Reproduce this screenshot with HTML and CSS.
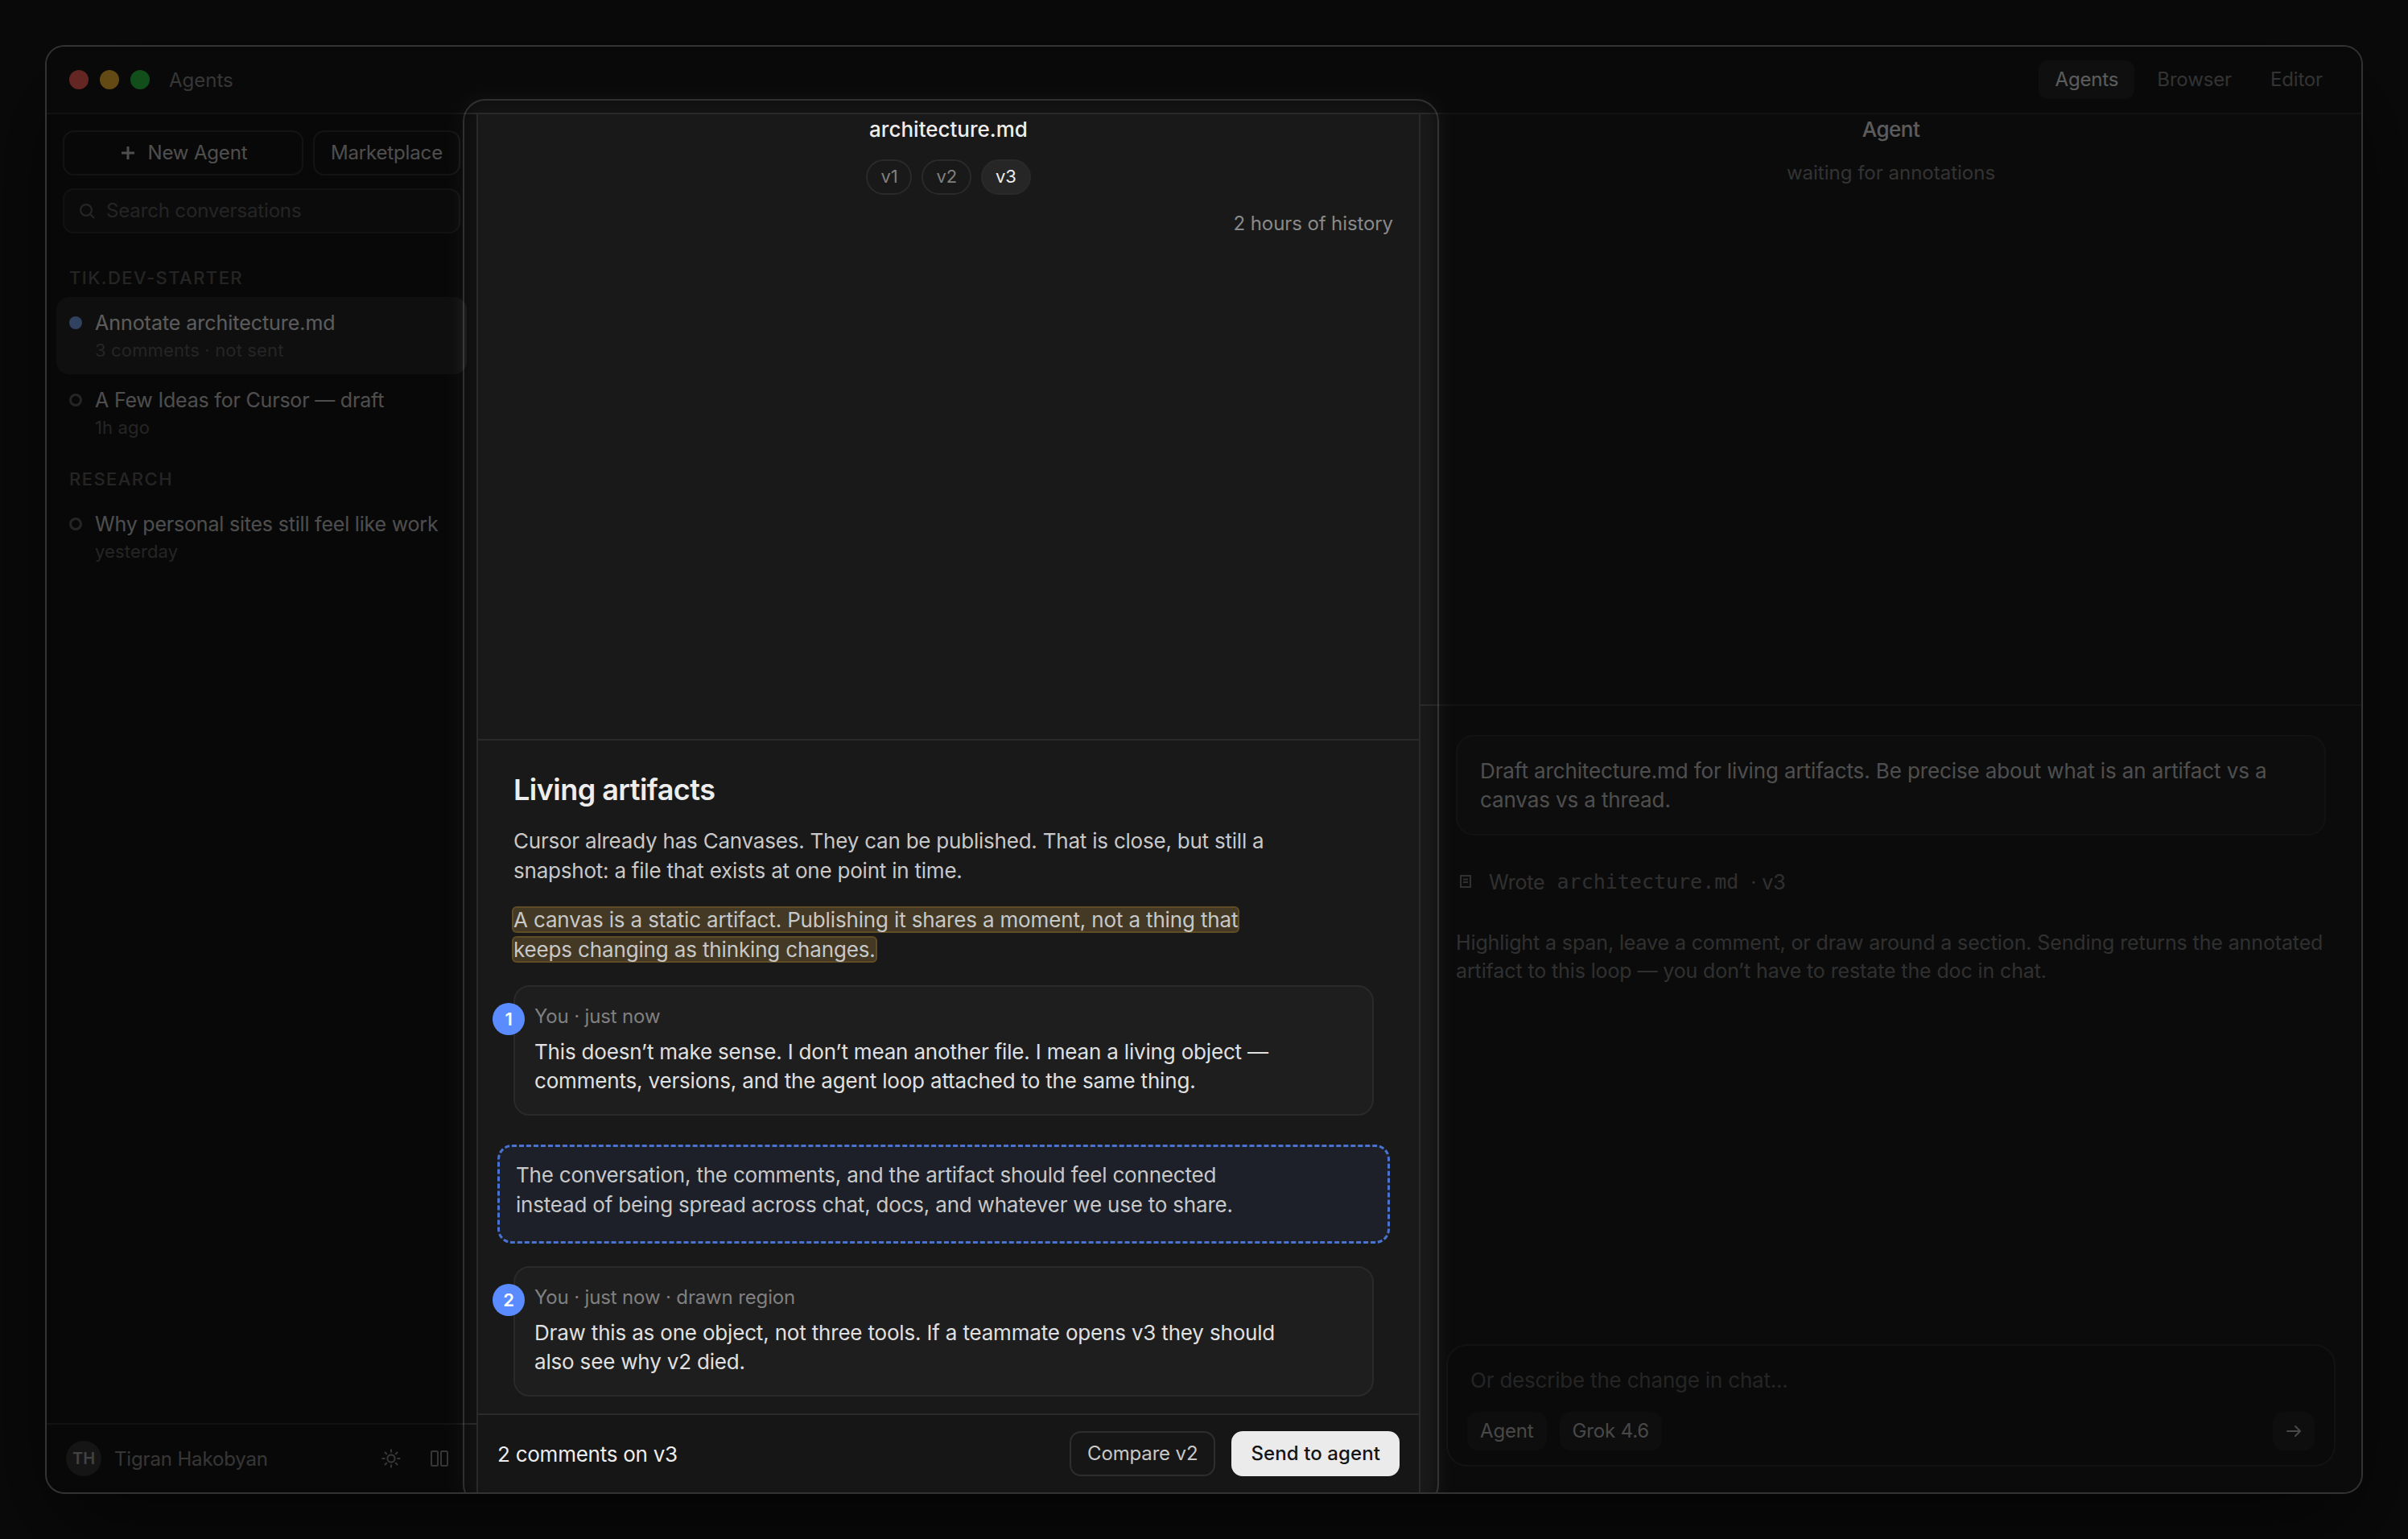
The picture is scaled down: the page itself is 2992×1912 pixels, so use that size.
FILE: index.html
```html
<!DOCTYPE html>
<html lang="en">
<head>
    <meta charset="UTF-8">
    <meta name="viewport" content="width=device-width, initial-scale=1.0">
    <title>Agents</title>
    <link rel="stylesheet" href="styles.css">
</head>
<body>

<div class="window">
    <header class="titlebar">
        <div class="lights">
            <span class="light red"></span>
            <span class="light yellow"></span>
            <span class="light green"></span>
        </div>
        <span class="window-title">Agents</span>
        <nav class="tabs">
            <a class="tab active">Agents</a>
            <a class="tab">Browser</a>
            <a class="tab">Editor</a>
        </nav>
    </header>

    <div class="panes">
        <aside class="sidebar">
            <div class="actions">
                <button class="btn new-agent">
                    <svg width="24" height="24" viewBox="0 0 24 24" fill="none" stroke="currentColor" stroke-width="3"><path d="M12 4v16M4 12h16"/></svg>
                    New Agent
                </button>
                <button class="btn">Marketplace</button>
            </div>
            <div class="search">
                <svg width="24" height="24" viewBox="0 0 24 24" fill="none" stroke="currentColor" stroke-width="2.2" stroke-linecap="round"><circle cx="11" cy="11" r="6.9"/><path d="M16 16l4.3 4.3"/></svg>
                <span>Search conversations</span>
            </div>

            <h2 class="group first">TIK.DEV-STARTER</h2>
            <div class="item selected">
                <span class="dot filled"></span>
                <div>
                    <div class="item-title">Annotate architecture.md</div>
                    <div class="item-sub">3 comments · not sent</div>
                </div>
            </div>
            <div class="item">
                <span class="dot"></span>
                <div>
                    <div class="item-title">A Few Ideas for Cursor — draft</div>
                    <div class="item-sub">1h ago</div>
                </div>
            </div>

            <h2 class="group">RESEARCH</h2>
            <div class="item">
                <span class="dot"></span>
                <div>
                    <div class="item-title">Why personal sites still feel like work</div>
                    <div class="item-sub">yesterday</div>
                </div>
            </div>

            <footer class="account">
                <span class="avatar">TH</span>
                <span class="account-name">Tigran Hakobyan</span>
                <span class="icon-btn">
                    <svg width="28" height="28" viewBox="0 0 28 28" fill="none" stroke="currentColor" stroke-width="2.1" stroke-linecap="round"><circle cx="14" cy="14" r="4.6"/><path d="M14 3.4v2.4M14 22.2v2.4M3.4 14h2.4M22.2 14h2.4M6.5 6.5l1.7 1.7M19.8 19.8l1.7 1.7M6.5 21.5l1.7-1.7M19.8 8.2l1.7-1.7"/></svg>
                </span>
                <span class="icon-btn">
                    <svg width="28" height="28" viewBox="0 0 28 28" fill="none" stroke="currentColor" stroke-width="2"><rect x="4" y="5" width="8" height="18" rx="1.5"/><rect x="16" y="5" width="8" height="18" rx="1.5"/></svg>
                </span>
            </footer>
        </aside>

        <main class="artifact">
            <div class="artifact-head">
                <div class="pane-title">architecture.md</div>
                <div class="versions">
                    <span class="version">v1</span>
                    <span class="version">v2</span>
                    <span class="version current">v3</span>
                </div>
                <div class="history">2 hours of history</div>
            </div>

            <article class="doc">
                <h1>Living artifacts</h1>
                <p class="lead">Cursor already has Canvases. They can be published. That is close, but still a snapshot: a file that exists at one point in time.</p>
                <p><mark>A canvas is a static artifact. Publishing it shares a moment, not a thing that keeps changing as thinking changes.</mark></p>

                <div class="comment">
                    <span class="badge">1</span>
                    <div class="comment-meta">You · just now</div>
                    <div class="comment-text">This doesn’t make sense. I don’t mean another file. I mean a living object — comments, versions, and the agent loop attached to the same thing.</div>
                </div>

                <div class="region">
                    <p>The conversation, the comments, and the artifact should feel connected instead of being spread across chat, docs, and whatever we use to share.</p>
                </div>

                <div class="comment">
                    <span class="badge">2</span>
                    <div class="comment-meta">You · just now · drawn region</div>
                    <div class="comment-text">Draw this as one object, not three tools. If a teammate opens v3 they should also see why v2 died.</div>
                </div>
            </article>

            <footer class="review-bar">
                <span class="review-count">2 comments on v3</span>
                <button class="btn">Compare v2</button>
                <button class="btn primary">Send to agent</button>
            </footer>
        </main>

        <section class="agent">
            <div class="agent-head">
                <div class="pane-title">Agent</div>
                <div class="agent-status">waiting for annotations</div>
            </div>

            <div class="thread">
                <div class="message">Draft architecture.md for living artifacts. Be precise about what is an artifact vs a canvas vs a thread.</div>
                <div class="tool-row">
                    <svg width="26" height="26" viewBox="0 0 26 26" fill="none" stroke="currentColor" stroke-width="2"><path d="M6 5h12v14H6zM9 9.5h6M9 13h6"/></svg>
                    <span>Wrote</span>
                    <code>architecture.md</code>
                    <span>· v3</span>
                </div>
                <p class="reply">Highlight a span, leave a comment, or draw around a section. Sending returns the annotated artifact to this loop — you don’t have to restate the doc in chat.</p>
            </div>

            <div class="composer">
                <div class="placeholder">Or describe the change in chat...</div>
                <div class="composer-row">
                    <span class="chip">Agent</span>
                    <span class="chip">Grok 4.6</span>
                    <span class="chip send">
                        <svg width="24" height="24" viewBox="0 0 24 24" fill="none" stroke="currentColor" stroke-width="2" stroke-linecap="round" stroke-linejoin="round"><path d="M4 12h16M14 6l6 6-6 6"/></svg>
                    </span>
                </div>
            </div>
        </section>
    </div>

    <!-- dims everything but the artifact pane -->
    <div class="dim"></div>
    <div class="spotlight"></div>
</div>

</body>
</html>
```

FILE: styles.css
```css
* {
    box-sizing: border-box;
    margin: 0;
    padding: 0;
}
body {
    width: 2992px;
    height: 1912px;
    padding: 56px;
    overflow: hidden;
    background: #0a0a0a;
    color: #ededed;
    font-family: Inter, "Liberation Sans", sans-serif;
    font-size: 24px;
    letter-spacing: -0.15px;
}
svg {
    display: block;
    flex: none;
}
.window {
    position: relative;
    display: flex;
    flex-direction: column;
    width: 2880px;
    height: 1800px;
    overflow: hidden;
    background: #121212;
    border: 2px solid #333;
    border-radius: 24px;
    box-shadow: 0 48px 120px rgba(0, 0, 0, 0.55);
}

/* title bar */
.titlebar {
    display: flex;
    align-items: center;
    height: 84px;
    padding: 0 28px;
    background: #141414;
    border-bottom: 2px solid #2a2a2a;
}
.lights {
    display: flex;
    gap: 14px;
}
.light {
    width: 24px;
    height: 24px;
    border-radius: 50%;
}
.red {
    background: #ff5f57;
}
.yellow {
    background: #febc2e;
}
.green {
    background: #28c840;
}
.window-title {
    margin-left: 24px;
    letter-spacing: 0;
    color: #8a8a8a;
}
.tabs {
    display: flex;
    gap: 8px;
    margin-left: auto;
}
.tab {
    height: 48px;
    padding: 0 20px;
    line-height: 48px;
    border-radius: 12px;
    color: #808080;
}
.tab.active {
    background: #232323;
    color: #ededed;
}

.panes {
    display: grid;
    grid-template-columns: 536px 1171px 1169px;
    flex: 1;
    min-height: 0;
}
.btn {
    display: flex;
    align-items: center;
    justify-content: center;
    gap: 12px;
    height: 56px;
    padding: 0 20px 1px;
    background: none;
    border: 2px solid #2e2e2e;
    border-radius: 14px;
    color: #c8c8c8;
    font: inherit;
    letter-spacing: inherit;
}

/* sidebar */
.sidebar {
    display: flex;
    flex-direction: column;
    padding-top: 20px;
    border-right: 2px solid #2a2a2a;
}
.actions {
    display: flex;
    gap: 12px;
    margin: 0 20px;
}
.new-agent {
    flex: 1;
}
.search {
    display: flex;
    align-items: center;
    gap: 12px;
    height: 56px;
    margin: 16px 20px 0;
    padding: 0 16px 1px;
    background: #181818;
    border: 2px solid #2a2a2a;
    border-radius: 14px;
    color: #5c5c5c;
}
.group {
    margin: 20px 28px 10px;
    font-size: 22px;
    font-weight: 500;
    line-height: 28px;
    letter-spacing: 1.45px;
    color: #5c5c5c;
}
.group.first {
    margin-top: 41px;
}
.item {
    display: flex;
    gap: 16px;
    margin: 0 12px;
    padding: 14px 16px;
    border-radius: 16px;
}
.item.selected {
    background: #232323;
}
.dot {
    width: 16px;
    height: 16px;
    margin-top: 10px;
    border: 3px solid #5c5c5c;
    border-radius: 50%;
}
.dot.filled {
    background: #7ba8f7;
    border: none;
}
.item-title {
    font-size: 25px;
    line-height: 36px;
    letter-spacing: -0.2px;
    color: #c8c8c8;
}
.selected .item-title {
    letter-spacing: -0.04px;
    color: #ededed;
}
.item-sub {
    font-size: 22px;
    line-height: 32px;
    letter-spacing: 0.15px;
    color: #5c5c5c;
}
.account {
    display: flex;
    align-items: center;
    gap: 16px;
    height: 86px;
    margin-top: auto;
    padding: 0 24px;
    border-top: 2px solid #2a2a2a;
    color: #8a8a8a;
}
.avatar {
    width: 44px;
    height: 44px;
    border-radius: 50%;
    background: #333;
    color: #a8a8a8;
    font-size: 20px;
    font-weight: 600;
    line-height: 44px;
    text-align: center;
}
.account-name {
    flex: 1;
}
.icon-btn {
    display: flex;
    align-items: center;
    justify-content: center;
    width: 44px;
    height: 44px;
}

/* artifact pane */
.artifact {
    display: flex;
    flex-direction: column;
    background: #191919;
    border-right: 2px solid #2a2a2a;
}
.artifact-head {
    display: flex;
    flex-direction: column;
    align-items: center;
    height: 778px;
    border-bottom: 2px solid #2a2a2a;
}
.pane-title {
    font-size: 26px;
    font-weight: 500;
    line-height: 38px;
    letter-spacing: 0;
}
.versions {
    display: flex;
    gap: 12px;
    margin-top: 18px;
}
.version {
    height: 44px;
    padding: 0 16px;
    border: 2px solid #2a2a2a;
    border-radius: 22px;
    color: #808080;
    font-size: 22px;
    line-height: 39px;
}
.version.current {
    background: #262626;
    color: #ededed;
}
.history {
    align-self: flex-end;
    margin: 18px 32px 0 0;
    line-height: 36px;
    letter-spacing: -0.1px;
    color: #8a8a8a;
}
.doc {
    flex: 1;
    width: 1157px;
    padding: 37px 44px 0;
    color: #c8c8c8;
    font-size: 26px;
    line-height: 37px;
}
.doc h1 {
    margin-bottom: 21px;
    color: #ededed;
    font-size: 36px;
    font-weight: 600;
    line-height: 48px;
    letter-spacing: -0.53px;
}
.doc p {
    max-width: 946px;
    margin-bottom: 24px;
}
.doc .lead {
    letter-spacing: -0.22px;
}
.doc mark {
    margin: 0 -2px;
    padding: 1px 2px;
    background: rgba(200, 160, 70, 0.24);
    border-radius: 6px;
    box-shadow: inset 0 0 0 2px rgba(214, 158, 46, 0.2);
    color: inherit;
    -webkit-box-decoration-break: clone;
    box-decoration-break: clone;
}
.comment {
    position: relative;
    height: 162px;
    margin-top: 26px;
    padding: 21px 24px;
    background: #1e1e1e;
    border: 2px solid #2a2a2a;
    border-radius: 20px;
}
.badge {
    position: absolute;
    top: 20px;
    left: -28px;
    width: 40px;
    height: 40px;
    border-radius: 50%;
    background: #5b8cff;
    color: #fff;
    font-size: 22px;
    font-weight: 600;
    line-height: 40px;
    text-align: center;
}
.comment-meta {
    color: #808080;
    font-size: 24px;
    line-height: 32px;
}
.comment-text {
    max-width: 950px;
    margin-top: 10px;
    color: #e0e0e0;
    line-height: 36.4px;
    letter-spacing: -0.18px;
}
.region {
    height: 123px;
    margin: 36px -20px 28px;
    padding: 16px 20px;
    background: rgba(91, 140, 255, 0.065);
    border: 3px dashed #4a72cf;
    border-radius: 18px;
    letter-spacing: -0.2px;
}
.region + .comment {
    margin-top: 0;
}
.review-bar {
    display: flex;
    align-items: center;
    gap: 20px;
    height: 98px;
    padding: 0 24px;
    background: #161616;
    border-top: 2px solid #2a2a2a;
}
.review-count {
    flex: 1;
    font-size: 26px;
    letter-spacing: -0.25px;
}
.primary {
    padding: 0 22px 1px;
    background: #ebebeb;
    border-color: #ebebeb;
    color: #141414;
    font-weight: 500;
    letter-spacing: 0.1px;
}

/* agent pane */
.agent {
    display: flex;
    flex-direction: column;
    background: #191919;
}
.agent-head {
    height: 735px;
    border-bottom: 2px solid #2a2a2a;
    text-align: center;
}
.agent .pane-title {
    letter-spacing: -0.5px;
}
.agent-status {
    margin-top: 17px;
    line-height: 36px;
    letter-spacing: 0;
    color: #808080;
}
.thread {
    flex: 1;
    padding: 36px 44px 0;
}
.message {
    padding: 25px 28px 23px;
    background: #1f1f1f;
    border: 2px solid #2a2a2a;
    border-radius: 22px;
    color: #c8c8c8;
    font-size: 26px;
    line-height: 36.4px;
    letter-spacing: -0.12px;
}
.tool-row {
    display: flex;
    align-items: center;
    gap: 15px;
    margin-top: 40px;
    color: #7a7a7a;
    font-size: 25px;
    line-height: 36px;
}
.tool-row code {
    font-family: "DejaVu Sans Mono", monospace;
    letter-spacing: 0;
}
.reply {
    margin-top: 40px;
    color: #7a7a7a;
    font-size: 25px;
    line-height: 35px;
    letter-spacing: -0.12px;
}
.composer {
    height: 152px;
    margin: 0 32px 32px;
    padding: 25px 24px 23px;
    background: #161616;
    border: 2px solid #2a2a2a;
    border-radius: 26px;
}
.placeholder {
    padding-left: 4px;
    color: #5c5c5c;
    font-size: 26px;
    line-height: 36px;
    letter-spacing: -0.2px;
}
.composer-row {
    display: flex;
    gap: 16px;
    margin-top: 21px;
}
.chip {
    height: 48px;
    padding: 0 16px;
    border-radius: 14px;
    background: #202020;
    color: #b8b8b8;
    line-height: 48px;
}
.send {
    display: flex;
    align-items: center;
    margin-left: auto;
    padding: 0 14px;
}

/* spotlight over the artifact pane, the soft edge comes from the blur */
.dim,
.spotlight {
    position: absolute;
    top: 65px;
    left: 517px;
    width: 1213px;
    height: 1749px;
    border-radius: 28px;
    pointer-events: none;
}
.dim {
    box-shadow: 0 0 0 2000px rgba(4, 4, 4, 0.62);
    filter: blur(8px);
}
.spotlight {
    border: 2px solid rgba(255, 255, 255, 0.14);
}
```
